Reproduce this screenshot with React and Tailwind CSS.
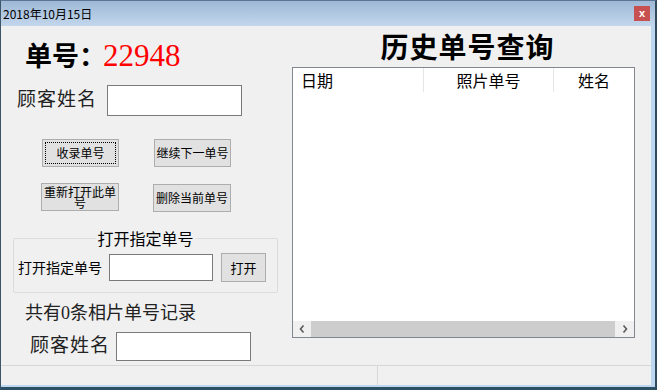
import React from 'react';

const cjk = "font-['Noto_Sans_CJK_SC',sans-serif]";
const serif = "font-['Liberation_Serif','Noto_Sans_CJK_SC',serif]";

const WinButton = ({ className = '', focused, children }) => (
  <button
    type="button"
    className={`relative flex items-center justify-center bg-[#e1e1e1] border border-[#adadad] text-[12px] text-black ${cjk} ${className}`}
  >
    {focused && <span className="absolute inset-[2px] border border-dotted border-black" />}
    {children}
  </button>
);

const TextBox = ({ className = '' }) => (
  <div className={`bg-white border border-[#7a7a7a] ${className}`} />
);

const Chevron = ({ dir }) => (
  <svg width="6" height="8" viewBox="0 0 6 8">
    <polyline
      points={dir === 'left' ? '4.5,0.5 1.5,4 4.5,7.5' : '1.5,0.5 4.5,4 1.5,7.5'}
      fill="none"
      stroke="#5a5a5a"
      strokeWidth="1.6"
    />
  </svg>
);

const App = () => {
  return (
    <div className="w-[657px] h-[390px] flex flex-col bg-[#f0f0f0] overflow-hidden border-t border-t-[#5c7592] border-l border-l-[#3e5468] border-r-2 border-r-[#2f4a5e] border-b-[3px] border-b-[#2c5064]">
      {/* title bar */}
      <div className="h-[25px] shrink-0 flex items-center justify-between pl-[2px] pr-[5px] bg-gradient-to-b from-[#9db8d6] to-[#c3d7ec]">
        <span className={`text-[12px] text-black ${cjk}`}>2018年10月15日</span>
        <div className="w-[16px] h-[15px] bg-[#c75050] flex items-center justify-center text-white text-[11px] font-bold leading-none font-['Liberation_Sans',sans-serif]">
          x
        </div>
      </div>

      <div className="flex-1 flex flex-col border-r-4 border-r-[#bcd7ef] border-b-2 border-b-[#bcd7ef]">
        <div className="h-[339px] flex">
          {/* left panel */}
          <div className="w-[289px] flex flex-col">
            <div className="mt-[12px] h-[34px] pl-[24px] flex items-center">
              <span className={`text-[27px] font-semibold text-black ${cjk}`}>单号</span>
              <span className={`text-[27px] font-semibold text-black w-[24px] ${cjk}`}>：</span>
              <span className="text-[31px] text-[#ff0000] font-['Liberation_Serif',serif] leading-none">22948</span>
            </div>

            <div className="mt-[13px] h-[31px] pl-[16px] flex items-center">
              <span className={`w-[90px] text-[19px] tracking-[1px] text-[#222] ${serif}`}>顾客姓名</span>
              <TextBox className="w-[135px] h-[31px]" />
            </div>

            <div className="mt-[23px] pl-[41px] flex gap-[35px]">
              <WinButton focused className="w-[77px] h-[28px]">收录单号</WinButton>
              <WinButton className="w-[77px] h-[28px]">继续下一单号</WinButton>
            </div>

            <div className="mt-[16px] pl-[40px] flex items-start gap-[34px]">
              <WinButton className="w-[78px] h-[28px]">
                <span className="w-[72px] text-center leading-[11px]">重新打开此单号</span>
              </WinButton>
              <WinButton className="w-[78px] h-[28px] mt-[1px]">删除当前单号</WinButton>
            </div>

            <div className="relative mt-[26px] ml-[12px] w-[265px] h-[55px] border border-[#dcdcdc] rounded-[2px] pt-[14px] pl-[4px]">
              <span className={`absolute left-1/2 -translate-x-1/2 -top-[12px] px-[2px] bg-[#f0f0f0] text-[16px] leading-[22px] text-black whitespace-nowrap ${cjk}`}>
                打开指定单号
              </span>
              <div className="h-[29px] flex items-center">
                <span className={`w-[91px] text-[14px] text-black ${cjk}`}>打开指定单号</span>
                <TextBox className="w-[104px] h-[27px]" />
                <WinButton className="ml-[8px] w-[45px] h-[29px] text-[13px]">打开</WinButton>
              </div>
            </div>

            <div className={`mt-[10px] pl-[24px] h-[20px] flex items-center text-[18px] text-[#222] ${serif}`}>
              共有0条相片单号记录
            </div>

            <div className="mt-[9px] h-[29px] pl-[29px] flex items-center">
              <span className={`w-[86px] text-[19px] tracking-[1px] text-[#222] ${serif}`}>顾客姓名</span>
              <TextBox className="w-[135px] h-[29px]" />
            </div>
          </div>

          {/* right panel */}
          <div className="w-[361px] flex flex-col">
            <div className={`mt-[2px] ml-[2px] w-[343px] pl-[8px] h-[36px] flex items-center justify-center text-[28px] font-semibold tracking-[1px] text-black ${cjk}`}>
              历史单号查询
            </div>
            <div className="mt-[3px] ml-[2px] w-[343px] h-[271px] flex flex-col bg-white border border-[#828790]">
              <div className={`h-[24px] flex text-[16px] text-black ${cjk}`}>
                <div className="w-[131px] pl-[8px] flex items-center border-r border-r-[#e5e5e5]">日期</div>
                <div className="w-[130px] flex items-center justify-center border-r border-r-[#e5e5e5]">照片单号</div>
                <div className="flex-1 flex items-center justify-center">姓名</div>
              </div>
              <div className="flex-1" />
              <div className="h-[16px] flex bg-[#f0f0f0]">
                <div className="w-[18px] flex items-center justify-center"><Chevron dir="left" /></div>
                <div className="flex-1 bg-[#cdcdcd]" />
                <div className="w-[19px] flex items-center justify-center"><Chevron dir="right" /></div>
              </div>
            </div>
          </div>
        </div>

        {/* status bar */}
        <div className="flex-1 flex border-t border-t-[#d7d7d7]">
          <div className="w-[377px] border-r border-r-[#d7d7d7]" />
          <div className="flex-1" />
        </div>
      </div>
    </div>
  );
};

export default App;
